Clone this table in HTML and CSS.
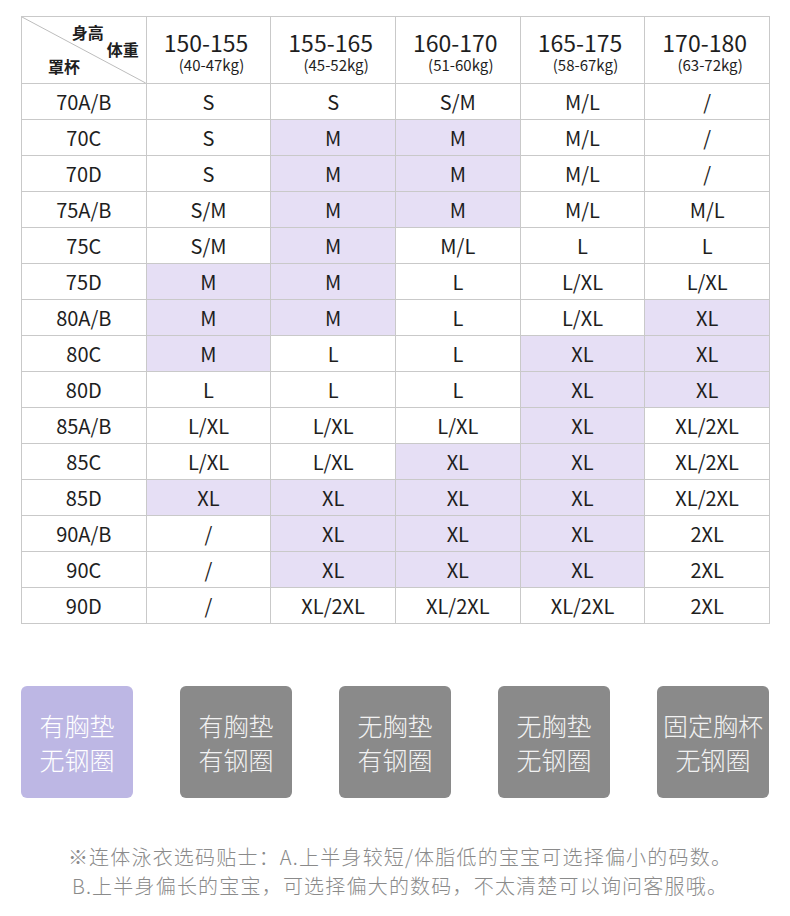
FILE: index.html
```html
<!DOCTYPE html>
<html lang="zh-CN">
<head>
<meta charset="utf-8">
<title>尺码表</title>
<link rel="stylesheet" href="styles.css">
</head>
<body>
<div class="page">
  <div class="size-grid">
    <div class="cell corner">
      <svg class="diag" viewBox="0 0 100 100" preserveAspectRatio="none"><line x1="0" y1="0" x2="100" y2="100" stroke="#bdbdbd" stroke-width="1" vector-effect="non-scaling-stroke"/></svg>
      <span class="c1">身高</span>
      <span class="c2">体重</span>
      <span class="c3">罩杯</span>
    </div>
    <div class="cell head"><span class="num">150-155</span><span class="sub">(40-47kg)</span></div>
    <div class="cell head"><span class="num">155-165</span><span class="sub">(45-52kg)</span></div>
    <div class="cell head"><span class="num">160-170</span><span class="sub">(51-60kg)</span></div>
    <div class="cell head"><span class="num">165-175</span><span class="sub">(58-67kg)</span></div>
    <div class="cell head"><span class="num">170-180</span><span class="sub">(63-72kg)</span></div>

    <div class="cell">70A/B</div><div class="cell">S</div><div class="cell">S</div><div class="cell">S/M</div><div class="cell">M/L</div><div class="cell">/</div>
    <div class="cell">70C</div><div class="cell">S</div><div class="cell hl">M</div><div class="cell hl">M</div><div class="cell">M/L</div><div class="cell">/</div>
    <div class="cell">70D</div><div class="cell">S</div><div class="cell hl">M</div><div class="cell hl">M</div><div class="cell">M/L</div><div class="cell">/</div>
    <div class="cell">75A/B</div><div class="cell">S/M</div><div class="cell hl">M</div><div class="cell hl">M</div><div class="cell">M/L</div><div class="cell">M/L</div>
    <div class="cell">75C</div><div class="cell">S/M</div><div class="cell hl">M</div><div class="cell">M/L</div><div class="cell">L</div><div class="cell">L</div>
    <div class="cell">75D</div><div class="cell hl">M</div><div class="cell hl">M</div><div class="cell">L</div><div class="cell">L/XL</div><div class="cell">L/XL</div>
    <div class="cell">80A/B</div><div class="cell hl">M</div><div class="cell hl">M</div><div class="cell">L</div><div class="cell">L/XL</div><div class="cell hl">XL</div>
    <div class="cell">80C</div><div class="cell hl">M</div><div class="cell">L</div><div class="cell">L</div><div class="cell hl">XL</div><div class="cell hl">XL</div>
    <div class="cell">80D</div><div class="cell">L</div><div class="cell">L</div><div class="cell">L</div><div class="cell hl">XL</div><div class="cell hl">XL</div>
    <div class="cell">85A/B</div><div class="cell">L/XL</div><div class="cell">L/XL</div><div class="cell">L/XL</div><div class="cell hl">XL</div><div class="cell">XL/2XL</div>
    <div class="cell">85C</div><div class="cell">L/XL</div><div class="cell">L/XL</div><div class="cell hl">XL</div><div class="cell hl">XL</div><div class="cell">XL/2XL</div>
    <div class="cell">85D</div><div class="cell hl">XL</div><div class="cell hl">XL</div><div class="cell hl">XL</div><div class="cell hl">XL</div><div class="cell">XL/2XL</div>
    <div class="cell">90A/B</div><div class="cell">/</div><div class="cell hl">XL</div><div class="cell hl">XL</div><div class="cell hl">XL</div><div class="cell">2XL</div>
    <div class="cell">90C</div><div class="cell">/</div><div class="cell hl">XL</div><div class="cell hl">XL</div><div class="cell hl">XL</div><div class="cell">2XL</div>
    <div class="cell">90D</div><div class="cell">/</div><div class="cell">XL/2XL</div><div class="cell">XL/2XL</div><div class="cell">XL/2XL</div><div class="cell">2XL</div>
  </div>

  <div class="types">
    <div class="type active"><span>有胸垫</span><span>无钢圈</span></div>
    <div class="type"><span>有胸垫</span><span>有钢圈</span></div>
    <div class="type"><span>无胸垫</span><span>有钢圈</span></div>
    <div class="type"><span>无胸垫</span><span>无钢圈</span></div>
    <div class="type"><span>固定胸杯</span><span>无钢圈</span></div>
  </div>

  <div class="tips">
    <p>※连体泳衣选码贴士：A.上半身较短/体脂低的宝宝可选择偏小的码数。</p>
    <p>B.上半身偏长的宝宝，可选择偏大的数码，不太清楚可以询问客服哦。</p>
  </div>
</div>
</body>
</html>
```

FILE: styles.css
```css
* { box-sizing: border-box; }

body {
  margin: 0;
  background: #ffffff;
  font-family: "Noto Sans CJK SC", "Noto Sans", sans-serif;
  color: #1e1e1e;
}

.page {
  width: 790px;
  padding: 16px 21px 0 21px;
}

.size-grid {
  display: grid;
  grid-template-columns: repeat(6, 1fr);
  grid-template-rows: 67px;
  grid-auto-rows: 36px;
  width: 749px;
  border-top: 1px solid #c9c9c9;
  border-left: 1px solid #c9c9c9;
}

.cell {
  border-right: 1px solid #c9c9c9;
  border-bottom: 1px solid #c9c9c9;
  display: flex;
  align-items: center;
  justify-content: center;
  font-size: 20px;
  line-height: 1;
  padding-top: 1px;
}

.cell.hl {
  background: #e6dff5;
}

.head {
  flex-direction: column;
  justify-content: flex-start;
  padding-top: 12px;
}

.head .num {
  font-size: 23px;
  line-height: 26px;
  padding-right: 5px;
}

.head .sub {
  font-size: 15px;
  line-height: 20px;
  padding-left: 6px;
}

.corner {
  position: relative;
  flex-direction: column;
  align-items: stretch;
  justify-content: flex-start;
  padding-top: 7px;
  font-size: 16px;
  font-weight: 700;
}

.corner span {
  display: block;
  line-height: 17px;
}

.corner .c1 { text-align: right; padding-right: 42px; }
.corner .c2 { text-align: right; padding-right: 7px; }
.corner .c3 { text-align: left; padding-left: 26px; }

.diag {
  position: absolute;
  left: 0;
  top: 0;
  width: 100%;
  height: 100%;
}

.types {
  display: flex;
  justify-content: space-between;
  width: 748px;
  margin-top: 62px;
}

.type {
  width: 112px;
  height: 112px;
  border-radius: 6px;
  background: #8a8a8a;
  color: #f2f2f2;
  display: flex;
  flex-direction: column;
  align-items: center;
  justify-content: center;
  font-size: 25px;
  line-height: 34px;
  font-weight: 300;
}

.type.active {
  background: #bdb7e4;
  color: #ffffff;
}

.tips {
  margin-top: 44px;
  width: 748px;
  padding-left: 10px;
  text-align: center;
  color: #8a8a8a;
  font-size: 20px;
  letter-spacing: 1.2px;
  font-weight: 300;
}

.tips p {
  margin: 0;
  line-height: 29px;
}
```
